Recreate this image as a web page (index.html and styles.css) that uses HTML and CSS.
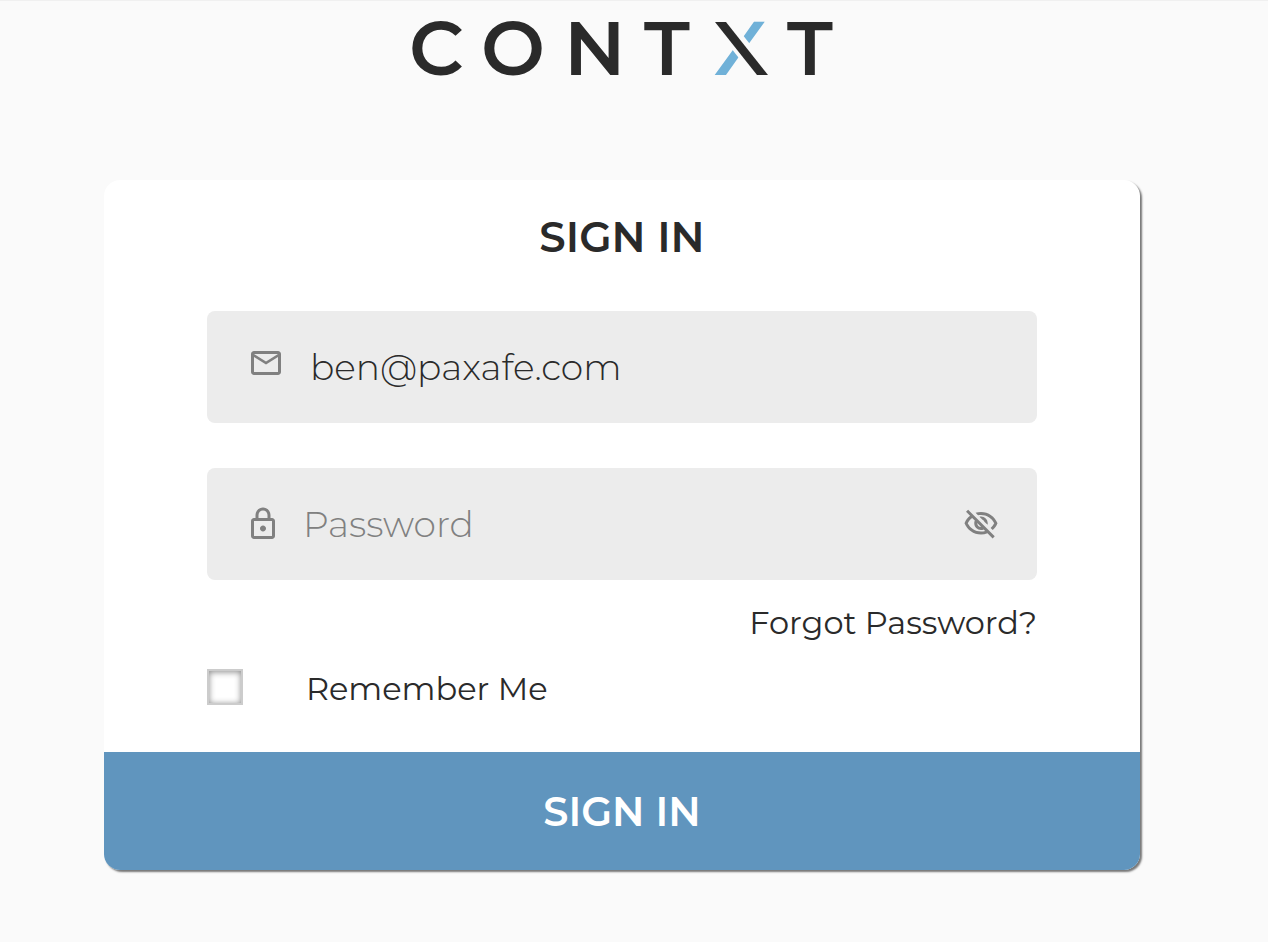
FILE: index.html
```html
<!DOCTYPE html>
<html lang="en">
<head>
    <meta charset="UTF-8">
    <meta name="viewport" content="width=device-width, initial-scale=1.0">
    <title>Sign In</title>
    <link rel="stylesheet" href="styles.css">
</head>
<body>

    <header>
        <svg class="logo" width="424" height="60" viewBox="0 0 424 60" role="img" aria-label="CONTXT">
            <text y="57" x="-1 71 154 234">CONT</text>
            <text y="57" x="304" class="logo-blue">X</text>
            <!-- dark slash over the blue one, with a gap on both sides -->
            <path class="logo-gap" d="M299 2h22l44 56h-22z"/>
            <path class="logo-slash" d="M305 4h11l42 53h-11z"/>
            <text y="57" x="377">T</text>
        </svg>
    </header>

    <main>
        <form class="card">
            <div class="card-body">
                <h1>SIGN IN</h1>

                <div class="field email">
                    <svg class="icon" viewBox="0 0 24 24" aria-hidden="true">
                        <path d="M22 6c0-1.100-.9-2-2-2H4c-1.100 0-2 .9-2 2v12c0 1.100.9 2 2 2h16c1.100 0 2-.9 2-2V6zm-2 0l-8 5-8-5h16zm0 12H4V8l8 5 8-5v10z"/>
                    </svg>
                    <input type="email" aria-label="Email" value="ben@paxafe.com">
                </div>

                <div class="field">
                    <svg class="icon" viewBox="0 0 24 24" aria-hidden="true">
                        <path d="M18 8h-1V6c0-2.760-2.240-5-5-5S7 3.240 7 6v2H6c-1.100 0-2 .9-2 2v10c0 1.100.9 2 2 2h12c1.100 0 2-.9 2-2V10c0-1.100-.9-2-2-2zM9 6c0-1.660 1.340-3 3-3s3 1.340 3 3v2H9V6zm9 14H6V10h12v10zm-6-3c1.100 0 2-.9 2-2s-.9-2-2-2-2 .9-2 2 .9 2 2 2z"/>
                    </svg>
                    <input type="password" aria-label="Password" placeholder="Password">
                    <button class="toggle" type="button" aria-label="Show password">
                        <svg class="icon" viewBox="0 0 24 24" aria-hidden="true">
                            <path d="M12 6c3.790 0 7.170 2.130 8.820 5.500-.59 1.220-1.420 2.270-2.410 3.120l1.410 1.410c1.390-1.230 2.490-2.770 3.180-4.530C21.270 7.110 17 4 12 4c-1.270 0-2.490.2-3.640.57l1.650 1.650C10.660 6.090 11.320 6 12 6zm-1.070 1.140L13 9.210c.57.25 1.030.71 1.280 1.280l2.070 2.070c.08-.34.14-.7.14-1.070C16.500 9.010 14.480 7 12 7c-.37 0-.72.05-1.070.14zM2.010 3.870l2.680 2.680C3.060 7.830 1.770 9.530 1 11.500 2.730 15.890 7 19 12 19c1.520 0 2.980-.29 4.320-.82l3.420 3.420 1.410-1.410L3.420 2.450 2.010 3.870zm7.500 7.500l2.610 2.610c-.04.01-.08.02-.12.02-1.380 0-2.500-1.120-2.500-2.500 0-.05.01-.08.01-.13zm-3.400-3.400l1.750 1.750c-.23.55-.36 1.150-.36 1.780 0 2.480 2.020 4.500 4.500 4.500.63 0 1.230-.13 1.770-.36l.98.98c-.88.24-1.800.38-2.750.38-3.790 0-7.170-2.130-8.820-5.500.7-1.430 1.720-2.610 2.930-3.530z"/>
                        </svg>
                    </button>
                </div>

                <a class="forgot" href="#">Forgot Password?</a>

                <div class="remember">
                    <input type="checkbox" id="remember">
                    <label for="remember">Remember Me</label>
                </div>
            </div>
            <button class="submit" type="submit">SIGN IN</button>
        </form>
    </main>

</body>
</html>
```
FILE: styles.css
```css
* {
    box-sizing: border-box;
}

body {
    margin: 0;
    padding: 17px 24px 48px 0;
    border-top: 1px solid #f0f0f0;
    background-color: #fafafa;
    color: #2a2a2a;
    font-family: Montserrat, Inter, sans-serif;
}

header {
    display: flex;
    justify-content: center;
    margin-bottom: 102px;
}

.logo {
    overflow: visible;
}

.logo text {
    font-size: 76px;
    font-weight: 600;
    fill: #2a2a2a;
}

.logo .logo-blue {
    fill: #70b1d8;
}

.logo-gap {
    fill: #fafafa;
}

.logo-slash {
    fill: #2a2a2a;
}

.card {
    width: 83.3%;
    margin: 0 auto;
    border-radius: 16px;
    overflow: hidden;
    background-color: white;
    box-shadow: 2px 2px 2px #777;
}

.card-body {
    display: flex;
    flex-direction: column;
    padding: 32px 103px 43px;
}

h1 {
    margin: 0 0 49px;
    font-size: 42px;
    line-height: 50px;
    font-weight: 600;
    text-align: center;
}

.field {
    display: flex;
    align-items: center;
    gap: 22px;
    height: 112px;
    margin-bottom: 45px;
    padding: 0 38px;
    border-radius: 8px;
    background-color: #ececec;
}

.email {
    gap: 26px;
    padding-left: 41px;
}

.icon {
    display: block;
    flex: none;
    width: 36px;
    height: 36px;
    fill: #808080;
}

.email .icon {
    margin-bottom: 8px;
}

.field input {
    flex: 1;
    min-width: 0;
    padding: 0;
    border: none;
    outline: none;
    background: none;
    color: #2a2a2a;
    font: inherit;
    font-size: 36px;
    font-weight: 300;
}

.field input::placeholder {
    color: #808080;
}

.toggle {
    padding: 0;
    border: none;
    background: none;
    cursor: pointer;
}

.forgot {
    align-self: flex-end;
    margin-top: -22px;
    color: #2a2a2a;
    font-size: 32px;
    line-height: 40px;
    text-decoration: none;
}

.remember {
    display: flex;
    align-items: flex-start;
    margin-top: 26px;
    font-size: 32px;
    line-height: 40px;
}

.remember input {
    appearance: none;
    width: 36px;
    height: 36px;
    margin: 0 63px 0 0;
    border: 2px solid #ccc;
    background-color: white;
    box-shadow: inset 0 1px 6px #888;
}

.submit {
    display: block;
    width: 100%;
    height: 118px;
    border: none;
    background-color: #6095be;
    color: white;
    font: inherit;
    font-size: 40px;
    font-weight: 600;
    cursor: pointer;
}
```
